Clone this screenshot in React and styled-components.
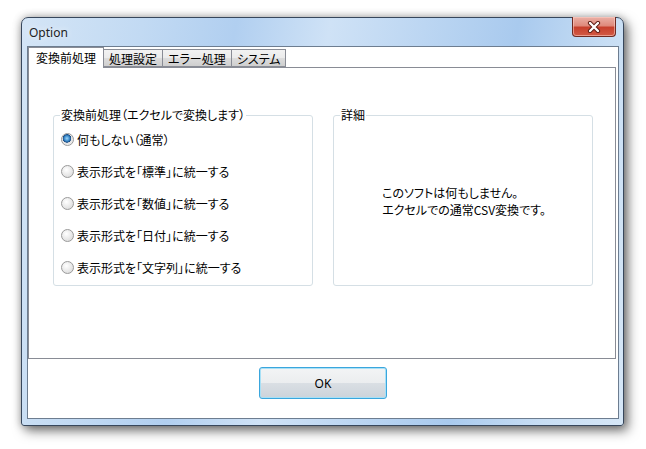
import styled, { createGlobalStyle } from 'styled-components';

const GlobalStyle = createGlobalStyle`
	html, body {
		margin: 0;
		padding: 0;
		background: #ffffff;
	}
	body {
		font-family: 'Noto Sans CJK JP', 'Noto Sans', sans-serif;
		font-size: 12px;
		color: #000;
	}
`;

const tabs = ['変換前処理', '処理設定', 'エラー処理', 'システム'];

const options = [
	'何もしない（通常）',
	'表示形式を「標準」に統一する',
	'表示形式を「数値」に統一する',
	'表示形式を「日付」に統一する',
	'表示形式を「文字列」に統一する',
];

const App = () => {
	return (
		<Stage>
			<GlobalStyle />
			<Window>
				<TitleBar>
					<Title>Option</Title>
					<CloseBtn type='button' aria-label='close'>
						<svg width='14' height='12' viewBox='0 0 14 12'>
							<path
								d='M3 2 L11 10 M11 2 L3 10'
								stroke='#5a1a12'
								strokeWidth='4.2'
								strokeLinecap='round'
							/>
							<path
								d='M3 2 L11 10 M11 2 L3 10'
								stroke='#ffffff'
								strokeWidth='2.4'
								strokeLinecap='round'
							/>
						</svg>
					</CloseBtn>
				</TitleBar>
				<Client>
					<TabStrip>
						{tabs.map((label, i) => (
							<Tab key={label} $active={i === 0}>
								{label}
							</Tab>
						))}
					</TabStrip>
					<Panel>
						<GroupBox>
							<Caption>変換前処理（エクセルで変換します）</Caption>
							<RadioList>
								{options.map((label, i) => (
									<RadioRow key={label}>
										<Radio $checked={i === 0} />
										{label}
									</RadioRow>
								))}
							</RadioList>
						</GroupBox>
						<GroupBox>
							<Caption>詳細</Caption>
							<Detail>
								このソフトは何もしません。
								<br />
								エクセルでの通常CSV変換です。
							</Detail>
						</GroupBox>
					</Panel>
					<ButtonRow>
						<OkButton type='button'>OK</OkButton>
					</ButtonRow>
				</Client>
			</Window>
		</Stage>
	);
};

const Stage = styled.div`
	width: 646px;
	height: 449px;
	padding: 17px 0 0 21px;
	box-sizing: border-box;
	overflow: hidden;
`;

const Window = styled.div`
	width: 603px;
	height: 409px;
	box-sizing: border-box;
	border: 1px solid #37475c;
	border-radius: 7px 7px 3px 3px;
	padding: 0 4px 6px 5px;
	display: flex;
	flex-direction: column;
	background: linear-gradient(
		100deg,
		#d4e5f6 0%,
		#c2daf3 18%,
		#b1cff0 32%,
		#cfe2f6 46%,
		#bcd6f2 60%,
		#a9caee 74%,
		#c8def4 88%,
		#d6e7f7 100%
	);
	box-shadow: 0 0 8px rgba(0, 0, 0, 0.3), 4px 5px 12px rgba(0, 0, 0, 0.5);
`;

const TitleBar = styled.div`
	height: 28px;
	display: flex;
	justify-content: space-between;
	align-items: center;
	padding: 0 3px 0 2px;
`;

const Title = styled.div`
	font-family: 'Noto Sans', 'Open Sans', sans-serif;
	font-size: 12px;
	color: #222;
	padding-top: 1px;
	text-shadow: 0 0 6px rgba(255, 255, 255, 0.9);
`;

const CloseBtn = styled.button`
	align-self: flex-start;
	margin-top: -1px;
	width: 44px;
	height: 20px;
	padding: 0;
	border: 1px solid #6e2a22;
	border-top: none;
	border-radius: 0 0 4px 4px;
	display: flex;
	align-items: center;
	justify-content: center;
	background: linear-gradient(
		#eab0a6 0%,
		#df8a7c 45%,
		#c7402d 55%,
		#d25a45 100%
	);
	box-shadow: inset 0 0 0 1px rgba(255, 210, 200, 0.55);
`;

const Client = styled.div`
	flex: 1;
	background: #ffffff;
	border: 1px solid #6d7d90;
	display: flex;
	flex-direction: column;
	padding: 0 2px 0 0;
	font-feature-settings: 'palt';
`;

const TabStrip = styled.div`
	height: 20px;
	display: flex;
	align-items: flex-end;
`;

const Tab = styled.div`
	position: relative;
	z-index: ${(p) => (p.$active ? 1 : 0)};
	box-sizing: border-box;
	height: ${(p) => (p.$active ? '21px' : '18px')};
	margin-bottom: ${(p) => (p.$active ? '-1px' : '0')};
	padding: ${(p) => (p.$active ? '0 7px 2px' : '0 5px')};
	margin-left: ${(p) => (p.$active ? '0' : '-1px')};
	border: 1px solid #898c95;
	border-bottom: ${(p) => (p.$active ? 'none' : '1px solid #898c95')};
	display: flex;
	align-items: center;
	white-space: nowrap;
	font-size: 12px;
	background: ${(p) =>
		p.$active
			? '#ffffff'
			: 'linear-gradient(#f2f2f2 0%, #ebebeb 50%, #dddddd 50%, #cfcfcf 100%)'};
	&:first-child {
		margin-left: 0;
	}
`;

const Panel = styled.div`
	height: 292px;
	box-sizing: border-box;
	border: 1px solid #898c95;
	display: flex;
	gap: 20px;
	padding: 47px 0 0 24px;
`;

const GroupBox = styled.div`
	position: relative;
	width: 260px;
	height: 171px;
	box-sizing: border-box;
	border: 1px solid #d5dfe5;
	border-radius: 3px;
`;

const Caption = styled.span`
	position: absolute;
	top: -9px;
	left: 6px;
	padding: 0 1px;
	background: #ffffff;
	line-height: 16px;
	white-space: nowrap;
`;

const RadioList = styled.div`
	display: flex;
	flex-direction: column;
	gap: 16px;
	padding: 15px 0 0 7px;
`;

const RadioRow = styled.label`
	height: 16px;
	display: flex;
	align-items: center;
	gap: 3px;
	white-space: nowrap;
`;

const Radio = styled.span`
	width: 11px;
	height: 11px;
	border-radius: 50%;
	border: 1px solid #9a9a9a;
	box-sizing: content-box;
	flex-shrink: 0;
	background: ${(p) =>
		p.$checked
			? 'radial-gradient(circle at 45% 40%, #9fd6f8 0%, #3f8fcf 28%, #1a4d85 45%, #e2e2e2 50%, #f6f6f6 100%)'
			: 'radial-gradient(circle at 40% 35%, #ffffff 0%, #ececec 45%, #d4d4d4 100%)'};
`;

const Detail = styled.div`
	height: 100%;
	display: flex;
	align-items: center;
	justify-content: center;
	text-align: left;
	line-height: 17px;
	padding-left: 2px;
`;

const ButtonRow = styled.div`
	flex: 1;
	display: flex;
	justify-content: center;
	padding: 8px 0 0 2px;
`;

const OkButton = styled.button`
	width: 128px;
	height: 32px;
	border: 1px solid #3aa6dd;
	border-radius: 3px;
	font-family: 'Noto Sans', sans-serif;
	font-size: 12px;
	color: #000;
	background: linear-gradient(
		#f3f4f5 0%,
		#ebedef 50%,
		#dadfe4 50%,
		#ccd3da 100%
	);
	box-shadow: inset 0 0 0 1px #a8e0f6;
`;

export default App;
